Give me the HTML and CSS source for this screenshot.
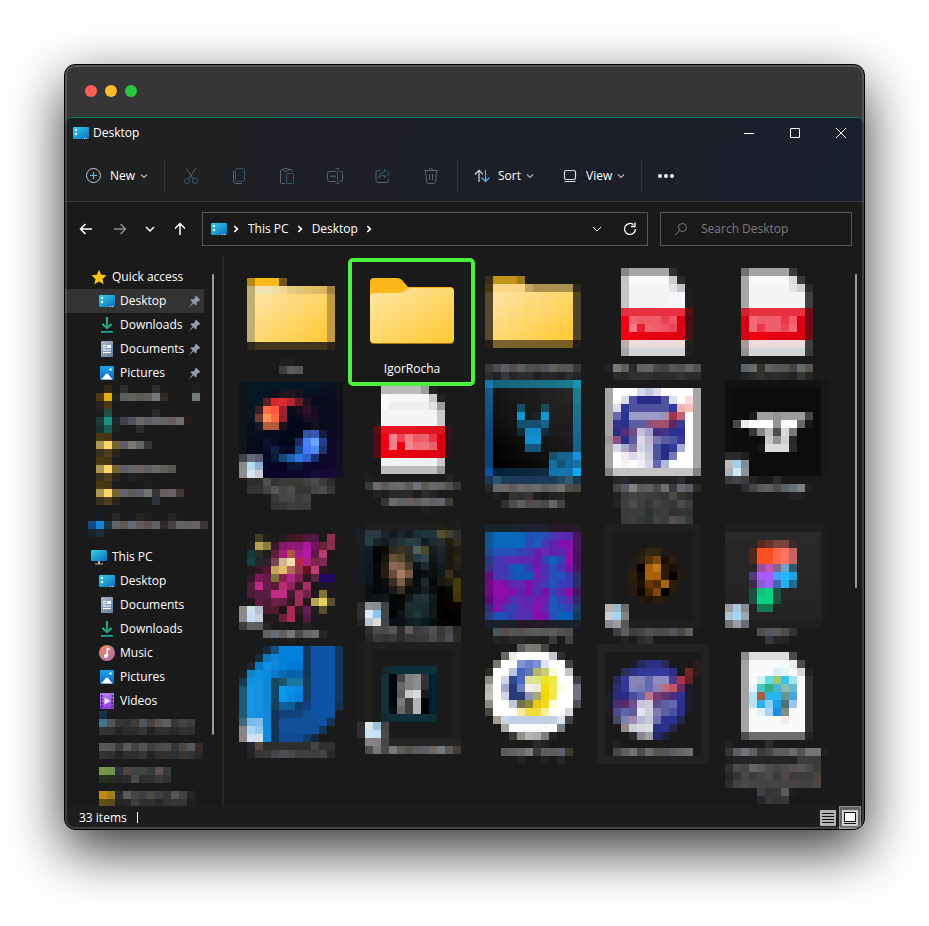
FILE: index.html
```html
<!DOCTYPE html>
<html lang="en">
<head>
<meta charset="utf-8">
<title>Desktop</title>
<link rel="stylesheet" href="styles.css">
</head>
<body>
<svg class="defs" aria-hidden="true">
  <defs>
    <linearGradient id="g-desk" x1="0" y1="0" x2="1" y2="1"><stop offset="0" stop-color="#31d3ea"/><stop offset="1" stop-color="#0c6cc0"/></linearGradient>
    <linearGradient id="g-down" x1="0" y1="0" x2="0" y2="1"><stop offset="0" stop-color="#1fcf85"/><stop offset="1" stop-color="#14a596"/></linearGradient>
    <linearGradient id="g-doc" x1="0" y1="0" x2="1" y2="1"><stop offset="0" stop-color="#a9bdd3"/><stop offset="1" stop-color="#5f7f9f"/></linearGradient>
    <linearGradient id="g-pic" x1="0" y1="0" x2="0" y2="1"><stop offset="0" stop-color="#1fa0e8"/><stop offset="1" stop-color="#0a68c4"/></linearGradient>
    <linearGradient id="g-mus" x1="0" y1="0" x2="1" y2="1"><stop offset="0" stop-color="#f58a5a"/><stop offset="1" stop-color="#a868b8"/></linearGradient>
    <linearGradient id="g-vid" x1="0" y1="0" x2="0" y2="1"><stop offset="0" stop-color="#b77cf5"/><stop offset="1" stop-color="#8a3fe0"/></linearGradient>
    <linearGradient id="g-fold" x1="0" y1="0" x2="1" y2="1"><stop offset="0" stop-color="#ffe7a6"/><stop offset="1" stop-color="#ffc831"/></linearGradient>
  </defs>
  <symbol id="desktop" viewBox="0 0 16 16"><rect y="2" width="16" height="12" rx="1" fill="url(#g-desk)"/><path d="M2 4h2v2H2zM2 8h2v2H2z" fill="#fff"/><path d="M11 13h1v1h-1zM13 13h1v1h-1z" fill="#cdeeff"/></symbol>
  <symbol id="downloads" viewBox="0 0 16 16"><path d="M3.500 7L8 11.300 12.500 7" fill="none" stroke="url(#g-down)" stroke-width="1.800"/><path d="M7.100 0h1.800v11H7.100z" fill="url(#g-down)"/><path d="M2 14h12v1.700H2z" fill="#16ac94"/></symbol>
  <symbol id="documents" viewBox="0 0 16 16"><rect x="2" width="12" height="16" rx="1" fill="url(#g-doc)"/><path d="M4 4h3v1H4zM4 6h3v1H4zM8 4h4v3H8zM4 8.500h8v1H4zM4 11h8v1H4z" fill="#fff"/></symbol>
  <symbol id="pictures" viewBox="0 0 16 16"><rect x="1" y="1" width="14" height="14" rx="1" fill="url(#g-pic)"/><path d="M2 14.500L7 9q1-1 2 0l4.500 5.500z" fill="#fff"/><circle cx="11.500" cy="4.500" r="1.300" fill="#d4efff"/></symbol>
  <symbol id="music" viewBox="0 0 16 16"><circle cx="8" cy="8" r="8" fill="url(#g-mus)"/><path d="M8.200 10.800V3.500l2.600 1.300" fill="none" stroke="#fff" stroke-width="1.500"/><circle cx="6.900" cy="10.900" r="2" fill="#fff"/></symbol>
  <symbol id="videos" viewBox="0 0 16 16"><rect x="1" width="14" height="16" rx="1" fill="url(#g-vid)"/><path d="M5.500 4.500v7L11.500 8z" fill="#f2e6ff"/><path d="M2 2h1.500v2H2zM2 5.500h1.500v2H2zM2 9h1.500v2H2zM2 12.500h1.500v2H2zM12.500 2H14v2h-1.500zM12.500 5.500H14v2h-1.500zM12.500 9H14v2h-1.500zM12.500 12.500H14v2h-1.500z" fill="#3f1c74"/></symbol>
  <symbol id="pc" viewBox="0 0 16 16"><rect y="1" width="16" height="11" rx="1" fill="url(#g-desk)"/><path d="M7 12h2v2.500H7zM4 14.500h8v1H4z" fill="#aab2b9"/></symbol>
  <symbol id="star" viewBox="0 0 16 16"><path d="M8 .8l2.200 4.900 5.300.6-4 3.600 1.200 5.300L8 12.500l-4.700 2.700 1.200-5.300-4-3.600 5.300-.6z" fill="#ffc40c"/></symbol>
  <symbol id="pin" viewBox="0 0 12 12"><path d="M7 .6L11.400 5l-1 .8-.9-.1-1.900 1.900.1 2-.9 1L4.500 8.300 1 11.600l-.6.1.1-.7L3.700 7.500 1.400 5.200l1-.9 2 .1 1.900-1.900-.1-1z" fill="#959ea5"/></symbol>
  <symbol id="chev-d" viewBox="0 0 10 10"><path d="M2 3.500L5 6.500 8 3.500" fill="none" stroke="currentColor" stroke-width="1.200"/></symbol>
  <symbol id="chev-r" viewBox="0 0 8 8"><path d="M2.300 1L5.300 4 2.300 7" fill="none" stroke="currentColor" stroke-width="1.700"/></symbol>
</svg>

<main class="window">
  <header class="frame-bar">
    <span class="light red"></span><span class="light amber"></span><span class="light green"></span>
  </header>
  <section class="explorer">
    <div class="head">
      <div class="title-row">
        <svg class="ico"><use href="#desktop"/></svg>
        <h1>Desktop</h1>
        <div class="win-buttons">
          <button type="button" aria-label="Minimize"><svg viewBox="0 0 12 12"><path d="M1 6.500h10" /></svg></button>
          <button type="button" aria-label="Maximize"><svg viewBox="0 0 12 12"><rect x="1.500" y="1.500" width="9" height="9" rx=".5"/></svg></button>
          <button type="button" aria-label="Close"><svg viewBox="0 0 12 12"><path d="M1 1l10 10M11 1L1 11"/></svg></button>
        </div>
      </div>
      <div class="toolbar">
        <button type="button" class="cmd cmd-new">
          <svg class="ico" viewBox="0 0 16 16" fill="none"><circle cx="7.500" cy="7.500" r="7" stroke="#c8c8ca"/><path d="M4 7.500h7M7.500 4v7" stroke="#4cc2ff" stroke-width="1.200"/></svg>
          <span>New</span><svg class="chev"><use href="#chev-d"/></svg>
        </button>
        <div class="tools">
          <button type="button" aria-label="Cut"><svg class="ico" viewBox="0 0 16 16" fill="none"><path d="M3.500.5l6.800 10.600M12.500.5L5.700 11.100" stroke="#606266"/><circle cx="4" cy="13" r="2.500" stroke="#2c5a76"/><circle cx="12" cy="13" r="2.500" stroke="#2c5a76"/></svg></button>
          <button type="button" aria-label="Copy"><svg class="ico" viewBox="0 0 16 16" fill="none"><path d="M2.500 3v10q0 2.500 2.500 2.500h6" stroke="#606266"/><rect x="4.500" y=".5" width="9" height="13" rx="2" stroke="#2c5a76"/></svg></button>
          <button type="button" aria-label="Paste"><svg class="ico" viewBox="0 0 16 16" fill="none"><path d="M6 15.500H2.500q-1 0-1-1v-12q0-1 1-1h2M10 1.500h2q1 0 1 1V4" stroke="#606266"/><rect x="4.500" y=".5" width="5.500" height="2.500" rx="1.200" stroke="#606266"/><rect x="7.500" y="5.500" width="7" height="10" rx="1" stroke="#2c5a76"/></svg></button>
          <button type="button" aria-label="Rename"><svg class="ico" viewBox="0 0 16 16" fill="none"><path d="M9 13.500H2.500q-2 0-2-2v-6q0-2 2-2H9M12.500 3.500h1q2 0 2 2v6q0 2-2 2h-1" stroke="#606266"/><path d="M8.500.5h4M8.500 15.500h4M10.500.5v15M3 8.500h6" stroke="#2c5a76"/><path d="M3 8h6" stroke="#2c5a76"/></svg></button>
          <button type="button" aria-label="Share"><svg class="ico" viewBox="0 0 16 16" fill="none"><path d="M5 2.500H3q-2 0-2 2v8q0 2 2 2h8.500q2 0 2-2V11" stroke="#606266"/><path d="M9.500 1.500l5 4-5 4V7.200Q5.500 7 3.500 10q.5-5.500 6-6z" stroke="#2c5a76" stroke-linejoin="round"/></svg></button>
          <button type="button" aria-label="Delete"><svg class="ico" viewBox="0 0 16 16" fill="none" stroke="#606266"><path d="M.5 2.500h15M6 2.500Q6 .5 8 .5t2 2M2.500 3l1 10.500q.2 2 2 2h5q1.800 0 2-2L13.500 3M6.500 6v6M9.500 6v6"/></svg></button>
        </div>
        <button type="button" class="cmd cmd-sort">
          <svg class="ico" viewBox="0 0 16 16" fill="none" stroke-width="1.200"><path d="M5 14V2.500M.8 6.500L5 2.300l4 4" stroke="#d8d8d8"/><path d="M11.500 2v11.500M7.500 9.500l4 4 4-4" stroke="#4cb4ee"/></svg>
          <span>Sort</span><svg class="chev"><use href="#chev-d"/></svg>
        </button>
        <button type="button" class="cmd cmd-view">
          <svg class="ico" viewBox="0 0 16 16" fill="none" stroke="#dcdcdc" stroke-width="1.200"><rect x="2.500" y="2.500" width="11" height="9" rx="1.500"/><path d="M2.500 13.500h11"/></svg>
          <span>View</span><svg class="chev"><use href="#chev-d"/></svg>
        </button>
        <button type="button" class="more" aria-label="See more"><i></i><i></i><i></i></button>
      </div>
    </div>

    <div class="nav-row">
      <div class="arrows">
        <button type="button" aria-label="Back"><svg viewBox="0 0 16 16"><path d="M14 8H3M7.500 3L2.500 8l5 5"/></svg></button>
        <button type="button" aria-label="Forward" class="dim"><svg viewBox="0 0 16 16"><path d="M2 8h11M8.500 3l5 5-5 5"/></svg></button>
        <button type="button" aria-label="Recent locations"><svg viewBox="0 0 16 16"><path d="M4 6l4 4 4-4"/></svg></button>
        <button type="button" aria-label="Up"><svg viewBox="0 0 16 16"><path d="M8 14V3M3 7.500l5-5 5 5"/></svg></button>
      </div>
      <nav class="address" aria-label="Address">
        <svg class="ico"><use href="#desktop"/></svg>
        <svg class="sep"><use href="#chev-r"/></svg>
        <a href="#">This PC</a>
        <svg class="sep"><use href="#chev-r"/></svg>
        <a href="#">Desktop</a>
        <svg class="sep"><use href="#chev-r"/></svg>
        <div class="address-end">
          <button type="button" aria-label="Previous locations"><svg viewBox="0 0 16 16"><path d="M4 6l4 4 4-4"/></svg></button>
          <button type="button" aria-label="Refresh"><svg viewBox="0 0 16 16"><path d="M13.500 8a5.500 5.500 0 1 1-2-4.300M13 1.500v4H9"/></svg></button>
        </div>
      </nav>
      <label class="search">
        <svg viewBox="0 0 16 16"><circle cx="9.500" cy="6.500" r="4"/><path d="M6.500 9.500L2 14"/></svg>
        <input type="search" placeholder="Search Desktop" aria-label="Search Desktop">
      </label>
    </div>

    <div class="body">
      <aside class="side">
        <ul>
          <li class="top"><svg class="ico"><use href="#star"/></svg><span>Quick access</span></li>
          <li class="on"><svg class="ico"><use href="#desktop"/></svg><span>Desktop</span><svg class="pin"><use href="#pin"/></svg></li>
          <li><svg class="ico"><use href="#downloads"/></svg><span>Downloads</span><svg class="pin"><use href="#pin"/></svg></li>
          <li><svg class="ico"><use href="#documents"/></svg><span>Documents</span><svg class="pin"><use href="#pin"/></svg></li>
          <li><svg class="ico"><use href="#pictures"/></svg><span>Pictures</span><svg class="pin"><use href="#pin"/></svg></li>
        </ul>
        <div class="mosaic side-a" data-tile="sideA"></div>
        <ul>
          <li class="top"><svg class="ico"><use href="#pc"/></svg><span>This PC</span></li>
          <li><svg class="ico"><use href="#desktop"/></svg><span>Desktop</span></li>
          <li><svg class="ico"><use href="#documents"/></svg><span>Documents</span></li>
          <li><svg class="ico"><use href="#downloads"/></svg><span>Downloads</span></li>
          <li><svg class="ico"><use href="#music"/></svg><span>Music</span></li>
          <li><svg class="ico"><use href="#pictures"/></svg><span>Pictures</span></li>
          <li><svg class="ico"><use href="#videos"/></svg><span>Videos</span></li>
        </ul>
        <div class="mosaic side-b" data-tile="sideB"></div>
        <span class="bar side-bar"></span>
      </aside>
      <div class="files">
        <div class="col c1">
          <div class="mosaic" data-tile="a1"></div>
          <div class="mosaic" data-tile="a2"></div>
          <div class="mosaic" data-tile="a3"></div>
          <div class="mosaic" data-tile="a4"></div>
        </div>
        <div class="col c2">
          <div class="folder">
            <svg viewBox="0 0 84 66" aria-hidden="true"><path d="M0 4q0-4 4-4h23q3 0 5 2l6 7h42q4 0 4 4v46H0z" fill="#fcb81a"/><path d="M0 61v1q0 4 4 4h76q4 0 4-4v-1z" fill="#a8760f"/><path d="M0 19q0-4 4-4h25q4 0 7-3 3-2 6-2h38q4 0 4 4v47q0 4-4 4H4q-4 0-4-4z" fill="url(#g-fold)"/></svg>
            <span>IgorRocha</span>
          </div>
          <div class="mosaic" data-tile="b2"></div>
          <div class="mosaic" data-tile="b3"></div>
          <div class="mosaic" data-tile="b4"></div>
        </div>
        <div class="col">
          <div class="mosaic" data-tile="c1"></div>
          <div class="mosaic" data-tile="c2"></div>
          <div class="mosaic" data-tile="c3"></div>
          <div class="mosaic" data-tile="c4"></div>
        </div>
        <div class="col">
          <div class="mosaic" data-tile="d1"></div>
          <div class="mosaic" data-tile="d2"></div>
          <div class="mosaic" data-tile="d3"></div>
          <div class="mosaic" data-tile="d4"></div>
        </div>
        <div class="col">
          <div class="mosaic" data-tile="e1"></div>
          <div class="mosaic" data-tile="e2"></div>
          <div class="mosaic" data-tile="e3"></div>
          <div class="mosaic" data-tile="e4"></div>
        </div>
        <span class="bar files-bar"></span>
      </div>
    </div>

    <footer class="status">
      <span>33 items</span><i class="caret"></i>
      <div class="modes">
        <button type="button" aria-label="Details"><svg viewBox="0 0 16 16"><rect width="16" height="16" rx="1" fill="#b4b4b4"/><path d="M2 3.500h12M2 6.500h12M2 9.500h12M2 12.500h12" stroke="#111"/></svg></button>
        <button type="button" aria-label="Large icons" class="on"><svg viewBox="0 0 16 16"><rect width="16" height="16" rx="1" fill="#d2d2d2"/><rect x="2.500" y="2.500" width="11" height="9" fill="#fff" stroke="#111"/><path d="M2 13.500h12" stroke="#111"/></svg></button>
      </div>
    </footer>
  </section>
</main>
<script src="mosaic.js"></script>
</body>
</html>
```
FILE: styles.css
```css
*, *::before, *::after { box-sizing: border-box; }
body {
  margin: 0;
  padding: 64px 64px 96px;
  background: #fff;
  color: #fff;
  font: 12px/16px "Open Sans", "Noto Sans", sans-serif;
}
button { padding: 0; border: 0; background: none; color: inherit; font: inherit; }
a { color: inherit; text-decoration: none; }
ul { margin: 0; padding: 0; list-style: none; }
svg { display: block; flex: none; }
.defs { position: absolute; width: 0; height: 0; }
.ico { width: 16px; height: 16px; }

.window {
  position: relative;
  overflow: hidden;
  border: 1px solid #000;
  border-radius: 11px;
  background: #363636;
}
body::before {
  content: "";
  position: absolute;
  z-index: -1;
  inset: 64px 64px 96px;
  border-radius: 11px;
  box-shadow: 0 20px 55px rgba(0, 0, 0, .8);
}
.window::after {
  content: "";
  position: absolute;
  inset: 0;
  border: 2px solid rgba(255, 255, 255, .16);
  border-radius: 10px;
  pointer-events: none;
}
.frame-bar { display: flex; align-items: center; gap: 8px; height: 52px; padding-left: 20px; }
.light { width: 12px; height: 12px; border-radius: 50%; }
.red { background: #ff5f57; }
.amber { background: #febc2e; }
.green { background: #28c840; }

.explorer {
  border-top: 1px solid #0f8068;
  border-radius: 7px 7px 0 0;
  background: #1a1a1a;
}
.head {
  border-bottom: 1px solid #3a3a3e;
  border-radius: 7px 7px 0 0;
  background: linear-gradient(100deg, #1f2022 20%, #1c1f28 60%, #1a1f2d);
}
.title-row { display: flex; align-items: center; gap: 4px; height: 30px; padding-left: 8px; }
h1 { margin: 0; font-size: 12px; font-weight: 400; }
.win-buttons { display: flex; margin-left: auto; }
.win-buttons button { display: grid; place-items: center; width: 46px; height: 28px; }
.win-buttons svg { width: 12px; height: 12px; fill: none; stroke: #fff; }

.toolbar { display: flex; align-items: center; height: 53px; padding: 2px 0 0 21px; }
.cmd { display: flex; align-items: center; gap: 8px; height: 32px; font-weight: 500; border-right: 1px solid #34353a; }
.cmd .chev { width: 10px; height: 10px; margin-left: -4px; color: #b4b4b6; }
.cmd-new { width: 79px; }
.tools { display: flex; height: 32px; padding: 0 2px; border-right: 1px solid #34353a; }
.tools button { display: grid; place-items: center; width: 48px; }
.cmd-sort { width: 77px; padding-left: 16px; border: 0; }
.cmd-view { width: 107px; padding-left: 27px; }
.more { display: flex; gap: 2px; padding: 12px 16px; }
.more i { width: 4px; height: 4px; border-radius: 50%; background: #fff; }

.nav-row { display: flex; align-items: center; height: 54px; padding: 0 12px; }
.arrows { display: flex; width: 125px; gap: 13px; padding-left: 1px; }
.nav-row button svg { width: 16px; height: 16px; fill: none; stroke: #fff; stroke-width: 1.5; }
.arrows .dim { margin-left: 4px; }
.arrows .dim svg { stroke: #8e8e8e; }
.arrows button { width: 17px; }
.address {
  display: flex; align-items: center; flex: 1; gap: 8px;
  height: 34px; padding: 0 9px 0 8px; border: 1px solid #575757;
}
.sep { width: 8px; height: 8px; margin: 0 -3px; }
.sep + a { margin-left: 3px; }
.address a { padding: 0 2px 0 0; }
.address-end { display: flex; gap: 17px; margin-left: auto; }
.address-end button:first-child svg { stroke-width: 1; }
.address-end button:last-child svg { stroke-width: 1.3; }
.search {
  display: flex; align-items: center; gap: 12px; flex: 0 0 192px;
  height: 34px; margin-left: 12px; padding-left: 12px; border: 1px solid #575757;
}
.search svg { width: 16px; height: 16px; fill: none; stroke: #7c7c7c; }
.search input { width: 100%; min-width: 0; padding: 0; border: 0; outline: 0; background: none; color: #fff; font: inherit; }
.search input::placeholder { color: #7c7c7c; opacity: 1; }

.body { display: flex; height: 550px; }
.side { position: relative; flex: 0 0 159px; padding-top: 9px; border-right: 2px solid #272727; overflow: hidden; }
.side li { display: flex; align-items: center; gap: 5px; width: 139px; height: 24px; padding: 0 3px 0 34px; }
.side li.top { padding-left: 26px; }
.side li.on { background: #333; }
.pin { width: 12px; height: 12px; margin-left: auto; }
.side-a { margin: 0 0 8px 23px; }
.side-b { margin: -2px 0 0 34px; }
.bar { position: absolute; width: 2px; border-radius: 1px; background: #9a9a9a; }
.side-bar { top: 18px; bottom: 71px; right: 8px; }

.files { position: relative; display: flex; flex: 1; padding: 4px 0 0 15px; overflow: hidden; }
.col { display: flex; flex-direction: column; flex: 0 0 120px; }
.c1 { flex-basis: 118px; padding-top: 2px; }
.c2 { position: relative; margin-top: -2px; }
.files-bar { top: 18px; bottom: 218px; right: 7px; }
.mosaic svg { shape-rendering: crispEdges; }

.folder { display: flex; flex-direction: column; align-items: center; height: 120px; width: 110px; padding-top: 20px; }
.folder svg { width: 84px; height: 66px; }
.folder span { margin-top: 17px; }
.folder::after {
  content: "";
  position: absolute;
  top: 0; left: -9px;
  width: 127px; height: 128px;
  border: 4px solid #4af23f;
  border-radius: 5px;
}

.status { display: flex; align-items: center; height: 23px; padding-left: 14px; background: #1d1d1d; }
.caret { width: 1px; height: 11px; margin-left: 10px; background: #fff; }
.modes { display: flex; align-items: center; margin: 0 3px 0 auto; gap: 3px; }
.modes button { display: grid; place-items: center; height: 23px; }
.modes svg { width: 16px; height: 16px; }
.modes .on { width: 22px; border: 1px solid #8c8c8c; background: #666; }
```
FILE: mosaic.js
```js
// Each tile is a list of rows separated by "/". A row is "firstColumn|tokens".
// Tokens: a hex colour, "-" for an empty cell, "c*n" for a run, "a>b*n" for a blend.
const CELL = 8;

const folderRows = (edge, edge2, n) => {
  const l = ['ffe29b>fed568', 'ffe096>ffd35e', 'ffde8c>ffd157', 'ffdc82>ffcf4c', 'ffda7a>ffcd43', 'ffd772>ffcb3a'];
  return l.map(g => `1|${edge} ${g}*${n} ${edge2}`).join('/');
};

const tiles = {
  sideA: [15, 19, '2|302611 - 2e2e2e - - - 2e2e30 1e1b19 - - - 1e1f1e/1|4d3a13 dfae07 242217 5d5d61 616161 5c5854 5f5c59 72767c 332d29 - - - 707a7b 1e1e1e/1|29231a 4a3912/1|1a201f 1c5048 - 1f1e1e - - - 2b2b2b - 1e1e1e/1|1d3c37 1b9080 1c2a28 444146 51525b 6d6865 5f5f5f 66656b 626262 675f5e 6c7072 261d17/1|1a302c 195c50 1a2422 - - 2e2d2c/1|4a3813 463411 1e1d1a/1|ab945a ffd76b 746332 5f5d68 7b796e 63676b 393533/1|38301f 50401f 2a251a/1|4a3813 463411 1e1d1a/1|ab945a ffd76b 746332 5d5b65 67676a 6c6361 5c5c63 6a6b69 605c5c 565650/1|38301f 50401f 2a251a - 20242a 1f1b19/1|4a3813 463411 1e1d1a - - - 1d1f22/1|ab945a ffd76b 746332 60646a 5c5c5c 5d5d66 707576 383533 655f5e 62616a 3e3a2f/1|38301f 50401f 2a251a - - - - 2d3439 1e1b19//1|181e27 - 272828 - 1b1d20 272522 1f1f1e - - 252629 1f1e1d/0|14497a 1687d8 1b3548 5e6468 615857 656c76 615c5c 605250 5f6264 302a28 464446 606263 616161 646562 3c3636/0|1a232a 1b2c37 1a1e22'],
  sideB: [14, 12, '0|183140/0|42738e 555 373737 2f3135 403d39 4d555e 4c413f 555 5f5f5f 373737 444 3d3d3b/0|333 313131 222 2d2d2d 2d2a27 353535 202226 302f2e 2f2f2f 292929 303132 2e2e2e//0|565958 545655 3d3d41 5a5a5a 444 565350 404040 4c4a48 4d4d4d 33383c 4d4646 56575c 352b26 161b24/0|333 2f2f2f 222 2f2f2f 2d2d2d 363432 222426 332f2d 2f3031 2b3036 3b3431 333 2a2826//0|75984a 6d9646 29323a 50443d 424345 434340 333a37 5c5350 3c3d3b/0|283220 262e20 242526 2b2b2b 4a4a4a 2e2e2e 2e3133 403836 323331//0|c58912 a37e1d 262d33 5b5957 464342 3d3f44 4d4b42 3f4042 353437 555 434242 2a2824/0|654d1a 5f491a 222426 272727 3d3d3d 2f3033 303030 282828 323232 34363a 343434 231e1a'],
  a1: [14, 15, '//1|b78817 fcba1a*3 6f5517/1|c0ad78 f0e0b0 f2e3b6 f2dea5 f5d88f e4cc80>dcb95c*5 9f8440/' + folderRows('c3ae76', 'c29b3e', 9) + '/1|2d261a 40341b*9 2d2618//5|1f1f1f*2/5|3d3d42 5c5c5c 555550'],
  a2: [14, 18, `0|0e1519 061924>081421*11 0f1118/0|0e1519 061a24>071220*4 1c1420 221420 1c1320 090e20*4 0f1118/0|0e1519 061722*2 5f1f28 d4292e dc2c30 b0262c 6a1c26 20121f 070b1c*3 0f0e1c/0|0e1519 061722 3a2029 ff6a42 ff5840 a0222c 080c1c 170e1c 32142a 150e20 070b1c*2 0f0e1c/0|0e1519 061722 703830 ff9551 ff6a42 9b222b 070a1a 0a0a1c 1a1020 190f20 080a1e*2 100e1e/0|0e1519 05101c 1c1726 b45e3e b05a3e 1e1320 05081a*3 150e1e 080a1e*2 100e1e/0|0e1519 04101c*2 040e1c*2 04081a*3 3452a0 3858b8 141a40 0c0722 110d20/0|10151a 040c1c*2 081430 050c24 04081a*2 1c2c66 4880f8 68a6ff 28408c 0f0628 120d22/0|10151a 040a1c*2 070f2c 102040 070c28 060a24 184a90 4078ff 5088f0 1c3468 0f0628 120d22/0|3e404a 686b7c 5a5c70 050a28 0c1a3c 164878 2060b0 2878e0 2e60c8 1a3070 0c0a2c 0f0628 120d22/0|8a8a8c b2dcf5 8fb2d2 080426*3 0a1432 0c1838 08082c 0b0630>100630*3 140e26/0|8c8c8e d3e5f0 c8ccd8 0a0428>0e0530*6 150b36*3 151028/1|2d2d2d*2 4d4e46 333 3d3c3a 3c3b37 3a3937 45433f 4a494e 3b3b3b 2c2c2a/1|323335*2 404346 5a5550 434446 4e4f4b 373636 353537 434445 4b4d4a 393634/4|39393a 474744 494947 3a3b3c 434440/4|333436 353535 403b39 3b3b39 3a3935`],
  a3: [14, 15, '8|1e191b*2/2|433d23 1f1e1a - 2a1820 3f1820 4a1722 4e1838 501748 - 8c2f55 241a1d/1|20201a b7a055 877b3f 3a1828 851868 931a70 8a187c ae18a0 721660 6a2238 8a2c50/1|153738 2a2e27 1e1c1a 5e203a a81882 ab5545 a31b8a b81aa8 5d1848 b23b72 1f1518/1|124445 20272c 35202a 7a4550 cbb890 f0dcb0 b22848 b01f80 80284c 7a2a4e/1|241a1e 351825 551636 c9a558 e5bb6c b5655c 903248 651520 c03c78 2c171f/1|351827 7c1a5c 651a48 80703a 8a2050 ad2880 7d204a 2c171f 5a2540 200a60*2/1|501c3c bc2d85 651c48 5a1c38 b82c78 902260 3a1828 a92c62 191719 1b1828 1a1923/1|4d1c35 5a1c40*2 bd2c80 bf2e80 4a1830 9c2d58 72224a 201a1a 807438/1|1e1a1b 5e1c3c 4a1a30 6b2048 681d48 341520 a02c58 221a1c b8a350 e5d060 5a5030/0|8b8b8c d0e0ea afbfcb 4a1a2a 4f1a30 1a1614 ab2a58 321c24 651c58 1d1b1c 564e2c/0|8b8b8c bfdef5 c4cfd8 1e1a1b*2 701e40 a82a58 1e191b 521a45/0|3e3e3e 606163 5b5c5e 252525 - - - - 222/3|606060 636d77 606060 777 484b4b 666 6b6c6c 2a2521/6|1e1e1e'],
  a4: [14, 20, '3|172c3a 14527e 0780d8 0480e0*2 14365c 0f54a4*3 14365c/2|172c3a 0b78c0 0c85d4 0080dd*3 14365c 0f54a4*3 14365c/1|1a2530 0c78c0 0d90e5 0c88dc 0880dd 0078d4*2 14365c 0f54a4*3 14365c/0|1a2025 1085c8 1090e0 0e8ade 0c78c8 0c6cb0 0564ae*2 14365c 0f54a4*3 14365c/0|183c50 1292dc*2 0e88d8 164862 1a5670 1776a4*2 163c5a 0f54a4*3 14365c/0|1f5872 1896e2 1490e0 0e88d8 154868 0e98e8 0b90e4 0a86dc 143c64 0f54a4*3 14365c/0|1f5872 1896e2 1490e0 0e88d8 154868 0e98e8 0b8ce4 0a80dc 143c64 0f54a4*3 14365c/0|1f5872 1896e2 1490e0 0e88d8 16405c 0c60a0 0f5c94 103c68 123f80 0f54a4*3 15304e/0|205a74 1896e2 1490e0 0e88d8 15345c 124078*2 124484 115090 0f54a4*3 181c22/0|3e6a82 78bce8 82bfea 0e88dc 163354 11509a*5 0f54a4 143454/0|8a8584 a8d6f5 96c8ec 0a8ce0 163354 104f9a*5 143458/0|8a8584 d0e2f2 cfe0ee 0a8ce0 163354 104c94*3 123b6c 15283c/1|23272c 544844 2e2c2c 2f2f2f*5 444442 2f2f2f 303030/1|222628 383838 3a3736 444345 4b4f53 4e4844 3e3e3f 403f44 3c3c3c 454044 2a2b25'],
  b2: [14, 18, '/3|bbb*5 9d9d9d 222/3|fafafa f6f6f6*5 c8c8c8 222/3|fafafa eee*4 f0f0f0 e2e2e4 9c9c9c/3|f4f5f6*7 cacaca/3|f4f5f6*7 cacaca/2|5e0d12 f0101c e41824>de1420*7 321416/2|550b12 f00010 f88088 f04455 f57c86 ec5864 ec606a e93342 dc0010 2e1416/2|550b12 f00010 f77e86 eb0010 f58890 f0707a f0737e ec606c dc0010 2e1416/2|550b12 f00010 ec0010>d80012*7 2e1416/3|eef2f3*7 c8c9ca/3|bcbdbe*7 959595/1|1f1f1f 1b1b1b*9 222/1|333a3c 706a69 5c5b5a 66686d 6b6c6c 5d5955 6c7077 5d5a54 666a70 656460 505250 3d3835/2|222224 1d1d1d 292929*3 1c1c1c 2b2b2b 242424/3|363636 6c6a67 5c6268 6b5c5a 5a5d60 6b6660 5c6268 63646e 403d30/8|1f1f1f'],
  b3: [14, 15, '1|1d1d1d*9 202014 1e1c19 1d1d1d/0|1c2024 2d3841 2b3a44 1e2427 131c24 1a252b 141a1c 1f2d33 22353f 24343c 55502a 433d30 2c2e30/0|182025 2a3c44 1a262b 131a1d 1e2a2e 243238 283d47 283b44 141d22 202a30 282f2e 231a10 352c1e/0|171c1f 121c22 020507 0d0a06 2c2c24 3a341c 28302c 4e625c 4a4a24 151c20 1a242c 1a1610 221c16/0|171c1f 0f1a22 000304 171410 6b4e38 56482c 2b2e1a 253a42 2f4850 0f1618 182228 1a1610 2c2410/0|171b1e 0e1a20 070a0c 2b1c10 8c6650 7e644c 4a3a28 0a1214 1b2a2e 0c1214 141c22 1c1810 241e18/0|171b1e 0e1a20 04080a 2a1c12 6c4c38 a87c64 7a5a44 06090a 091012 0a0f10 11181c 3a2e20 1a1612/0|171b1e 0c161c 04080a 100e0a 3a2c20 7c6244 2c2218 070c0c 182a2e 04080a 191912 24200f 453a0a/0|17191b 0a1014 04080a 0a0c0c 1a1a16 3a3224 0c0e0c 081010 122024 0a1010 020303 0a0a04 453a0a/0|17181a 0e1218 10151b 10181e 06090a 040808 0e1a1c 1c3032 203436 0f1c1e 020202 060602 40360a/0|2d2d2e 8e9092 888b90 424548 030606 06090a 1a2c30 1a2c2e*2 0e181a 020202 040402 080602/0|2f3032 dcecf8 88c4ec 424548 020404 0c1416 182a2e 1e3436 1a2a2c 101a1c 000*2 040402/0|262627 b6c6d2 dadcdc 424344 0a1012*2 101c1e 122022 0e1a1a 081010 040404 040402*2/1|303030 4c4c4c 4a4a4a 555 2c2c2c 5c5c5c 3c3c3e 424244 4e5254 383838 4a4646 2a2826/1|262626 3a3a3a 333 3a3a3a 2c2c2c 383838 3a3a3a*2 484e4c 3a3a3a 4b4d54 302b28'],
  b4: [14, 20, '0|1d1d1d 1f1f1f*12/0|1c1c1c 1e1e1e - - - - - - - - - - 1e1e1e/0|1c1c1c 1e1e1e - - - - - - - - - - 1e1e1e/0|1c1c1c 1e1e1e - 182428 0f303a*6 - - 1e1e1e/0|1c1c1c 1e1e1e - 13313a 000508 444 828282 8c8c8c 333336 00222e - - 1e1e1e/0|1c1c1c 1e1e1e - 13313a 000508 666 808080 8c8c8c 303030 00222e - - 1e1e1e/0|1c1c1c 1e1e1e - 13313a 000508 5e5e5e c8c8c8 dadada 1a1a1a 00222e - - 1e1e1e/0|1c1c1c 1e1e1e - 13313a 000508 7c7c7c 404040 b4b4b4 020202 00222e - - 1e1e1e/0|1c1c1c 1e1e1e - 13313a 050f12 6b6b6b 404040 b4b4b4 020202 00222e - - 1e1e1e/0|1c1c1c 1e1e1e - 182a30 103038*6 - - 1e1e1e/0|2f2f30 dde2e6 9cc4dc 444648 - - - - - - - - 1e1e1e/0|2f2f30 c5e4f7 c5e0f2 4a4b4c - - - - - - - - 1e1e1e/0|1d1d1d 868688 828284 444 242424*9/1|4d4d4e 767a7c 4c4a4e 787c76 5c5c58 50564e 5a5a62 5c6264 6e6662 707a82 5e5854 403c3a'],
  c1: [14, 15, '//1|382d18 c49418*3 a07a1a 1e1b18/1|4a3812 fad585*4 c0a860 ab9150*5 302c20/' + folderRows('554a30', '504528', 10) + '/1|241f18 7a6430>785c22*10 241f18///1|38383a 4d4a50 5c6066 5a4c52 5c5f58 4f4f4a 504e48 525561 665f5c 565656*2 3a3a3a/1|2c2c2e 222 373a3c 262626 2d2d2d 2c2c2c 202020 272727*2 222 2c2c2c 242424'],
  c2: [14, 18, '1|1878ac 17607e>1a7a8c*10 1594b0/1|165a8c 161616>262626*10 1e7a8c/1|155688 141414>252525*10 1e7a8c/1|145284 121212>161616*3 145068 1b1b1b*2 1a4c60 202020*3 1c748c/1|134e80 111>151515*3 1494d0 181c1e 1a2528 1494d0 1f1f1f*3 1c7090/1|124a7c 0e0e0e>131313*3 145070 154f72*2 186488 1e1e1e*3 1a6c90/1|11487c 0a0a0a>111*3 122a38 1288c4*2 182c38 1d1d1d*3 186890/1|104478 070707>0f0f0f*4 1290d4*2 161616>1b1b1b*4 18648c/1|104478 040404>0c0c0c*4 145880*2 141414>191919*4 176088/1|104478 020202>111*7 17506e 146490*2 1494dc/1|104478 000>0e0e0e*7 1570a8 125478 146a9c 1670a4/1|1250a0 06223c>102a40*7 1474b0*3 10a8f8/1|1a3a58 2c5470 1c3c58 1a3a58*6 1f4c60 305c70 1a3a4c/1|24282a 62686e 706560 5c5e64 6c6b68 666 6a6c6c 5c605e 636864 707468 4c4c4c 4c453a/2|1d1f21 - 36332e 2c3036 3c3432 1e1e1e - 242424 222624/3|303030 4c4c4c 5c6066 544a4c 505052 48484c 666662 444'],
  c3: [14, 15, '1|18232c*4 1f2030*4 261828*3 241a28/1|105490 0868bc*4 1e50b4 1858b8 3048b4 4838b4 5c2cb0 5828ac 4a1460/1|0c5898 0868bc*4 2c48b4 1c5cb8 4838b4 5c24ac 8410ac*2 4a1460/1|1c4c94 2450b8*3 3440b4 4438b0 6020ac 6828b0 6020ac 5828b0 8c10a8 4a1060/1|243c80 4438b4 5030b4 6428b0 5c28b0*2 7018ac 2c44b0 0864b8 3440b4 8c10a8 4a1060/1|3c3080 4038b4 4834b0 1058b8 1458b8 3c38b4 7018b0 4c30b0 2450b8 4c34b0 7c10ac 401860/1|601080 4834b0 3c3cb4 1c50b8 1458b4 1058b4 6c20ac 4c30b0 2450b8*2 3c38b4 2c2c68/1|700c80 8c0cac 7c10a8 5828b0 6428b0 8010ac 5828b0 3c3cb4 2450b8 3440b4 3c38b4 2c2c68/1|700c80 8c0cac*2 8410a8 5828b0 7c10a8 4c30b0 7810a8 3440b4 6028ac 8c0ca8 401860/1|600c78 8010ac*2 4834b0 6824ac 5828b0 7c18b0 6820ac 1c58b8 3c3cb4 5c28ac 302868/1|382880 8410ac 4c30b0 3440b4 5430b0 6424b0 8c10ac 5c28b0 1c58b8 2450b4 3440b4 203c70/1|283c84 1c50b8*2 3c38b0 5430b0*2 8c0cac 7018ac 2450b8 0c60bc*2 103c60/1|18202c*4 241828*4 18202c*4/2|4c545c 5c4c44 545650 5c504c 545860 5c5c58 545a58 605a58 505250 4c4c4c/2|242424 1f1f1f 282828*2 242424*2 1f1f1f 3a3a3a - 404040'],
  c4: [14, 20, '5|5c5c58 7c7c76 787872 444/3|686860 ececE8 fff*4 c8c8cc 303030/2|787868 fff*2 8094d4 6880cc 7c90d4 e0e4f4 fff*2 444/1|2c2c24 fff*2 b8c4dc 4464c0 6478ac b0b868 c8cc74 fcfcdc fff c4c4c8/1|8c8c80 fff d0d4e4 2c4a8c 4c68c0 dce09c e0e880 ece428 f0e840 fff*2 3c4044/1|b8b8b0 fff a4a8c8 283c7c 6c80c4 f0f0f0 ececd8 f4dc08 f0e84c fcfce0 fff 70747a/1|c0c0b8 fff d4d4e4 283c7c*2 8c94b4 a8a870 f0d800 f0e84c fff*2 70747a/1|8c8c84 fff*2 c0c8d8 70744c 8c8838 e8cc08 f4d820 fcfcdc fff*2 4c5058/1|48483c fff*3 f4e8a8 f4dc38*2 f8f09c fff*2 d8d8dc/2|a0a090 c8d8e8 c0d0e4*6 dce4ec 444/3|a8a8a0 f8fafc*5 fff 7c8084/4|3c3c34 90908c b4b4b0 acacac 7c7c78 242424/7|282a2e 222/3|5a5a64 64645f 6c6866 7c7c7c 3c3a3a 605e60 5e5c5c 5c6070 403828/5|222426 - - 222 - 25282a'],
  d1: [14, 15, '/3|868686 a4a5a5*5 2f2f2f/3|c4c4c4 fafafa*5 cdcdcd 2c2c2c/3|c4c4c4 f5f5f5*5 e2e3e4 c4c5c6 1c1c1c/3|c4c4c4 f2f3f3*5 f4f6f9*2 1e1e1e/3|c4c4c4 f2f3f4*5 f4f6f9*2 1e1e1e/3|e82c38 e63240*7 5a0e16/3|f00010 f56470 ef5c68*3 ea4050 ee5865 d80012 4a0f14/3|f00010 f47a84 ea1c30 f06470 f05c68 ee5462 ea4656 dc0012 4a0f14/3|f00010>dc0010*8 4a0f14/3|bcadad ecdcdc*7 1f1f1f/3|a4a4a5 d2d5d7*7 1f1f1f//1|1c242e 787874 5c5f60 2a2a2a 5f6162 646664 4c4a48 40404c 605650 4e5254 6a625e 565250/2|2b2b2b 282828 303030*3 2c2c2c*3 333 2a2a2a*2'],
  d2: [14, 18, '/1|a6a6a6 fff*3 d8d8ec c0c4e4 dcdcec fff*4 a6a6a6/1|a6a6a6 fff dcdcec 5052a0 282c88*3 5052a0 dcdfee fff f8dcdc a6a6a6/1|a6a6a6 dcdcec 32369a 5052a0*5 32369a f0b4b0 f4c0bc a6a6a6/1|a6a6a6 6868b0 2c3090 9a9cc8*4 a890b4 a83048 c06070 fff a6a6a6/1|a6a6a6 30328c 2c3088 5c5ca4*2 885080 a0506c*2 602868 383c94 fff a6a6a6/1|a6a6a6 2c2c84 503078 704c84 c4c0dc a8a0c8 402c7c 443488 2c3090*2 fff a6a6a6/1|a09498 8c5080 282c84 5c5c9c dcd8e8 bcb4d0 7874b0 5c5ca4 5054a0 38389a fff a6a6a6/1|a6a6a6 d4d8e8 a8a8cc 8c78a8 d4d4e8 c0c0dc 5052a0 282c84 34389a a8acd4 fff a6a6a6/1|a6a6a6 fff f4e8ec dcd8e8 e8e8f0 c8c8e0 5052a0 262a88 7478b8 fff*2 a6a6a6/1|a6a6a6 fff fcf0f0 fff f0f0f4 d4d4e8 6468ac b4b8d8 fff*3 a6a6a6/1|828282 c4c4c4*10 828282/2|272727 2b2b2e 222*6 2c2c30/2|444446 5a5866 7c8480 5c5c60 62605c 4c4a4c 706e6a 3a3a3a 646a6e 5c5a62 342c24/2|1f2224 3c3c3c 444 404040 3c3c3c 3a3c3a 343432 484a44 343434 2c2c2c/2|1f2428 404040 4c4e4a 3e403e 363634 444 383c3e 343838 484a4e 403c3a/3|3c3c3c*2 3a3e40 303030 3c3c3c*2 303030 343434*2/3|363a3c 403c3c 34383a 2e3234 3e4240 383c3e 5c4e48 484a50 3c3836'],
  d3: [14, 15, '1|1f1f1f*12/' + '1|1e1e1e - - - - - - - - - - 1e1e1e/'.repeat(2) + '1|1e1e1e - - - 201c18 342614*2 201c18 - - - 1e1e1e/1|1e1e1e - - 221c16 302010 543008 784814 181008 2a1e14 - - 1e1e1e/1|1e1e1e - - 261a10 000 a45c0c c07818 2a1804 181004 1c1814 - 1e1e1e/1|1e1e1e - - 2c1c08 140a00 a86008*2 2c1c08 040200 241a12 - 1e1e1e/1|1e1e1e - - 281a08 201000 683800 502c00 a46410 2c1c08 - - 1e1e1e/1|1e1e1e - - 281c10 100800 442800 784810 000 241a10 - - 1e1e1e/1|1e1e1e - - - 201a14 201408 2a1c08 201a14 - - - 1e1e1e/1|b4b4b4 9cb8cc 6c6c6c - - - - - - - - 1e1e1e/1|c4d0dc a0d4f4 808488 - - - - - - - - 1e1e1e/1|888c90 9c9c9c 545658 1e1e1e*9/2|3c4042 5a5e62 443c38 444 505052 4c4c50 4c4a4a 54545e 484848 665c58/3|222 - 2a2a2a 333'],
  d4: [14, 20, '0|222*14/0|222 - - - - - - - - - - - - 222/0|222 - - - 1c1c24 28285c 2c3080*2 28285c - - - 2c1a1a 222/0|222 - - 2a2c5c 2c3080 34389a*4 2c3080 - 702824 2c1a1a 222/0|222 - 28285c 34389a 8484b8*2 6468ac 8c8cc0*2 50388c a83448 602424 - 222/0|222 - 2a2c74 34389a 8484b8 7c7cb4 6468b0 9080b0 bc6c7c c05460 682c64 1c1c28 - 222/0|222 1c1c2a 2a2c78 2c2c88 4c4c9c 6464ac bc7488 783c70 683470 4c2c80 2c3090 1c1c2c - 222/0|222 1c1c2a 4c2c74 542c68 70508c c8c4dc d0ccdc 5c4c8c 5c60a4 6468ac 2c3090 1c1c2c - 222/0|222 281a1c 4c4c8c 6064a8 5c5c9c e4e4f0 d0d0dc 7c7cb0 5c60a4 4c50a0 2c3088 1c1c24 - 222/0|222 - 444c60 8080b8 a48ab0 b8b8d4 c8c8dc 6c6cac 2c3090*2 24264c - - 222/0|222 - 201a1c 988888 d0d0dc d8d8e0 dcdcdc 2c3088 2c3090 24264c - - - 222/0|222 - - - 2c2c34 88888c a0a0a8 24286c 202240 - - - - 222/0|222 - 222 - - - - - - - - - - 222/0|222 - 404850 645e58 70706e 504c48 6c6c6a 54564f 54545e 5a6064 646864 746a66 - 222/0|222*14'],
  e1: [14, 15, '/3|727272 a2a3a3*5 3c3c3c/3|a8a8a8 f8f9fa*5 dcdcdc 3c3c3c/3|a8a8a8 f5f5f5*5 e4e5e6 cfd0d2 2c2c2c/3|a8a8a8 f3f4f5*7 404040/3|a8a8a8 f3f4f5*7 404040/3|d02030 e63240*7 720c14/3|d80012 f46a76 f05c6a*3 ea3646 f05c6a dc0012 720c14/3|d80012 f46a76 ec3646 f05c6a*2 ea4656 f06a76 dc0012 720c14/3|d80012 ee0010>dc0010*7 720c14/3|a89898 ecdcdc*7 404040/3|929292 d2d5d7*7 3c3c3c//3|5a646e 6e6a64 38302c 5e6264 5a585e 5a584e 42444c 626a6c 5e524c/3|222 2a2a2a 333 2a2a2a 2e2e2e 2a2a2a 222 363636 292624'],
  e2: [14, 18, '1|121212*12 161616/' + '1|0e0e0e 0c0c0c*11 171717/'.repeat(3) + '1|0e0e0e 0c0c0c*2 1c1c1c a0a0a0*2 949494 9c9c9c*3 444 0c0c0c 171717/1|0e0e0e 484848 ececec fff*3 949494 fcfcfc*2 6a6a6a 181818 0c0c0c 171717/1|0e0e0e 0c0c0c*2 383838 848484 bcbcbc 4c4c4c d8d8d8 787878 0c0c0c*3 171717/1|0e0e0e 0c0c0c*4 c8c8c8 949494 d0d0d0 282828 0c0c0c*3 171717/1|0e0e0e 0c0c0c*3 161616 dcdcdc*3 2c2c2c 0c0c0c*3 171717/1|2a2a2a*2 1f1f1f 0c0c0c*9 171717/1|bcbcbc a0d0f0 848c94 0c0c0c*9 171717/1|a8b0b8 d0e8f8 8c9498 0c0c0c*9 171717/1|3c3c3e 44444a 3c3c3e 242424 - - 2c2c2c/3|2b2d30 444 5c5854 5c5f64 504c48 5c6268 687078 808080 28221c/9|222226 1f2122'],
  e3: [14, 15, '1|1f1f1f*12 1c1c1c/1|2a2a2a*12 1c1c1c/1|272727*4 60281c 6c3428 7a4438 784440 3a2a2a 292929*3 1c1c1c/1|272727*3 54281c f85020*2 ff6848 ff7464 c8645c 292929*3 1c1c1c/1|262626*3 54281c f85020*2 ff6848 ff7464 c8645c 292929*3 1c1c1c/1|262626*4 9c4c9c c054b8 80648c 68a4cc 305868 282828*3 1c1c1c/1|252525*3 54387c a45cfc*2 44a0f8 20b8ff 20a4dc 272727*3 1c1c1c/1|252525*3 3c2c4c 8c5cd0 a060fc 4068b0 20b0f0 206c8c 262626*3 1c1c1c/1|242424*3 1c5040 10c07c 0cd084 205040 252525*5 1c1c1c/1|232323*3 1c5040 0cd084*2 205040 252525*5 1c1c1c/1|9c9ca0 a8c8e0 848c94 222 187854*2 242424*6 1c1c1c/1|b4c0cc a4d4f8 9ca4ac 222*9 1c1c1c/1|707478 9c9ca0 686c74 1f1f1f*9/5|505052 505664 5c5a58 4c4c4c 34342e/6|34383f 2a2624 242424'],
  e4: [14, 20, '/3|8c8c8c dcdcdc*5 4c4c4c/3|a4a4a4 fafafa*5 ececec 4c4c4c/3|a4a4a4 fafafa*3 d4f0f8 e4f4f8 fafafa d8d8d8 242424/3|a4a4a4 fafafa ccf4f4 60e0e4 9cc87c 38c4f0 a8e0f4 fafafa 303030/3|a4a4a4 e8f4fc 48c8c0 34ac84 4cb4c8 8cbcb4 6cb8d4 fafafa 303030/3|a4a4a4 b4e4f8 a85c48 28b4f0*2 68948c 48a4dc fafafa 303030/3|a4a4a4 b4e4f8 28b0ec 8cccf0 1ca0e8 4c7478 98c8ec fafafa 303030/3|a4a4a4 fafafa e0f0f8 a4d4f4 1c8ce0 808c84 fafafa*2 303030/3|a4a4a4 fafafa*4 f4ece4 fafafa*2 303030/3|a4a4a4 fafafa*7 303030/3|4c4c4c 6c6c6c*7 242424/1|222 - - - - 2e2c2a/1|333 5c5c68 707678 645e5a 3c3a3c 44444a 5c5c60 5a5e62 6c6c70 505254 747474 707678 241e18/1|1d1d1d 242424*8 3a3c40 3a3c3e 3a3a3a/1|2c2e30 4a4a4e 444 6c6464 5c5a60 504e48 444 4c4c4c 54504c 54564f 4a4a4a 3c3c38/1|25282a 343434 484848 3c3c3c 444 4c4c4c 3c3c3e 54444c 3c3c3c*3 4a443c/1|2a2e30 484044 4a4c44 444*5 484440 424242*2 4c4640/5|40404a 343434 383838 5c5c5e 201e1a/5|262626 363a40 323436 3c3432'],
};

const rgb = h => {
  const s = h.length === 3 ? [...h].map(c => c + c).join('') : h;
  return [0, 2, 4].map(i => parseInt(s.slice(i, i + 2), 16));
};

function expand(token) {
  const [spec, count] = token.split('*');
  const n = Number(count || 1);
  const [from, to] = spec.split('>');
  if (from === '-') return Array(n).fill(null);
  const a = rgb(from), b = rgb(to || from);
  return Array.from({ length: n }, (_, i) => {
    const t = n > 1 ? i / (n - 1) : 0;
    return `rgb(${a.map((v, k) => Math.round(v + (b[k] - v) * t)).join()})`;
  });
}

function draw(el) {
  const [cols, rows, text] = tiles[el.dataset.tile];
  let out = '';
  text.split('/').forEach((row, y) => {
    if (!row) return;
    const [start, list] = row.split('|');
    list.trim().split(' ').flatMap(expand).forEach((fill, i) => {
      if (fill) out += `<rect x="${(Number(start) + i) * CELL}" y="${y * CELL}" width="${CELL}" height="${CELL}" fill="${fill}"/>`;
    });
  });
  el.innerHTML = `<svg width="${cols * CELL}" height="${rows * CELL}" aria-hidden="true">${out}</svg>`;
}

document.querySelectorAll('.mosaic').forEach(draw);
```
